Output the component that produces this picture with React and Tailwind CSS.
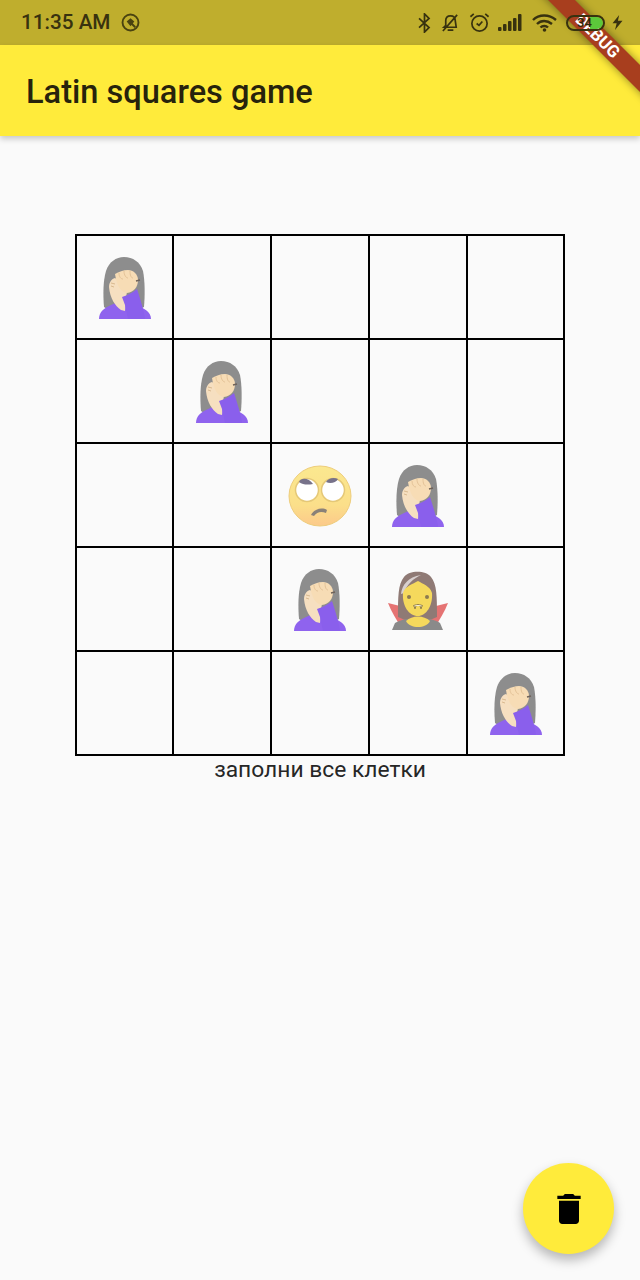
import React from "react";

const Palm = () => (
  <svg width="54" height="62" viewBox="0 0 54 62" className="block">
    <path d="M6 50 C5 38 5 24 8 14 C11 5 18 0 26 0 C35 0 42 5 45 14 C47 24 47 38 46 50 L38 54 L12 54Z" fill="#8d8d8d" />
    <path d="M1 62 C1 55 6 51 13 48 L20 45 L33 47 L38 48 C46 51 53 55 53 62Z" fill="#8f63ee" />
    <path d="M11 30 C11 26 13 22 17 21 L30 30 L28 40 L27 54 L23 53 C17 49 12 41 11 30Z" fill="#f6dfc0" />
    <path d="M24 12 L42 17 L45 30 L41 36 L38 26 Z" fill="#8d8d8d" />
    <path d="M17 17 C21 15 25 13 30 13 C35 13 40 17 40 23 C40 30 36 35 29 36 C23 35 19 30 17 17Z" fill="#f7dcb5" />
    <path d="M21 16 C21 20 23 22 25 22 M26 14 C26 18 28 21 30 21 M32 14 C32 18 33 21 35 21" stroke="#e4c398" strokeWidth="1" fill="none" />
    <path d="M24 40 C30 38 34 36 39 32 C41 38 45 50 47 61 C47 62 46 62 44 62 L30 62 L27 48Z" fill="#8a5fec" />
    <path d="M38 24 L42 23" stroke="#6f6259" strokeWidth="1.400" />
    <path d="M13 26 L17 27 M13 29 L16 30" stroke="#d9b98f" strokeWidth="1" />
  </svg>
);

const Roll = () => (
  <svg width="64" height="62" viewBox="0 0 64 62" className="block">
    <defs>
      <linearGradient id="rg" x1="0" y1="0" x2="0" y2="1">
        <stop offset="0" stopColor="#fbe88f" />
        <stop offset="0.65" stopColor="#fbdf8a" />
        <stop offset="1" stopColor="#fcc98a" />
      </linearGradient>
    </defs>
    <ellipse cx="32" cy="31" rx="31" ry="30" fill="url(#rg)" stroke="#eecd7c" strokeWidth="1" />
    <circle cx="19" cy="25" r="11.500" fill="#fff" stroke="#e5c877" strokeWidth="1.500" />
    <circle cx="45" cy="25" r="11.500" fill="#fff" stroke="#e5c877" strokeWidth="1.500" />
    <path d="M11 17 C13 12 21 13 25 19 C20 20 15 20 11 17Z" fill="#77728a" />
    <path d="M38 17 C40 13 46 12 50 14 C48 18 42 19 38 17Z" fill="#77728a" />
    <path d="M23 50 C26 44 34 42 39 45 L38 48 C33 46 29 47 26 51Z" fill="#8a8178" />
  </svg>
);

const Vamp = () => (
  <svg width="60" height="62" viewBox="0 0 60 62" className="block">
    <path d="M0 34 L16 38 L18 50 L13 58 C8 50 3 42 0 34Z" fill="#e57373" />
    <path d="M60 34 L44 38 L42 50 L47 58 C52 50 57 42 60 34Z" fill="#e57373" />
    <path d="M10 48 C10 28 10 15 16 8 C21 1 38 1 43 8 C49 15 49 28 49 48 L42 51 L17 51Z" fill="#8f7a75" />
    <path d="M13 25 C14 16 20 8 33 6 C25 10 19 15 16 24Z" fill="#d8d0cf" />
    <path d="M4 61 L7 54 C10 52 14 51 18 50 L41 50 C46 51 50 52 52 54 L55 61Z" fill="#8a8a8a" />
    <path d="M18 52 C22 60 38 60 42 52 C36 46 24 46 18 52Z" fill="#f5d95c" />
    <path d="M15 24 C17 17 25 15 30 12 C35 15 42 17 44 24 C45 37 38 47 30 47 C21 47 14 37 15 24Z" fill="#f5d95c" />
    <circle cx="21" cy="28" r="2" fill="#8c7a50" />
    <circle cx="39" cy="28" r="2" fill="#8c7a50" />
    <path d="M25 37 C28 35 32 35 35 37 M26 37 L27 40 L28 37 M32 37 L33 40 L34 37" fill="#f7f1dc" stroke="#95824a" strokeWidth="1" />
  </svg>
);

const cells = [
  ["p", "", "", "", ""],
  ["", "p", "", "", ""],
  ["", "", "r", "p", ""],
  ["", "", "p", "v", ""],
  ["", "", "", "", "p"],
];

const Cell = ({ v, first, last, lastRow }) => (
  <div
    className={`flex items-center justify-center border-t-2 border-l-2 border-black pt-[2px] ${first ? "w-[97px]" : last ? "w-[99px] border-r-2" : "w-[98px]"} ${lastRow ? "h-[106px] border-b-2" : "h-[104px]"}`}
  >
    {v === "p" && <Palm />}
    {v === "r" && <Roll />}
    {v === "v" && <Vamp />}
  </div>
);

export default function App() {
  return (
    <div className="relative flex h-[1280px] w-[640px] flex-col overflow-hidden bg-[#fafafa] font-['Roboto',sans-serif]">
      <div className="flex h-[45px] items-center justify-between bg-[#bfae2d] pl-[21px] pr-[17px] text-[#38320f]">
        <div className="flex items-center gap-[11px]">
          <span className="text-[20.7px] font-medium leading-none">11:35 AM</span>
          <svg width="19" height="19" viewBox="0 0 20 20" fill="none" stroke="#4a4310" strokeWidth="2">
            <circle cx="10" cy="10" r="8.400" />
            <path d="M6 9 L10 5.500 L14 9 L10 14Z" fill="#4a4310" stroke="none" />
            <path d="M10 10 L15 15" />
          </svg>
        </div>
        <div className="relative z-10 flex items-center">
          <svg width="13" height="20" viewBox="0 0 14 22" fill="none" stroke="#38320f" strokeWidth="1.900">
            <path d="M1 6 L12 16 L7 21 L7 1 L12 6 L1 16" />
          </svg>
          <svg className="ml-[10px]" width="19" height="19" viewBox="0 0 20 20" fill="none" stroke="#38320f" strokeWidth="1.800">
            <path d="M3 15 L5 13 L5 8 C5 4 8 3 10 3 C13 3 15 5 15 8 L16 15Z M7 18 L13 18 M2 19 L17 2" />
          </svg>
          <svg className="ml-[9px]" width="21" height="21" viewBox="0 0 22 22" fill="none" stroke="#38320f" strokeWidth="1.800">
            <circle cx="11" cy="12" r="8" />
            <path d="M8 12 L10.500 14 L14 10 M1.500 5 L5 2 M20.500 5 L17 2" />
          </svg>
          <svg className="ml-[8px]" width="24" height="17" viewBox="0 0 24 17" fill="#38320f">
            <rect x="0" y="13" width="3.500" height="4" rx="1" />
            <rect x="5" y="10" width="3.500" height="7" rx="1" />
            <rect x="10" y="7" width="3.500" height="10" rx="1" />
            <rect x="15" y="4" width="3.500" height="13" rx="1" />
            <rect x="20" y="0" width="3.500" height="17" rx="1" />
          </svg>
          <svg className="ml-[10px]" width="25" height="18" viewBox="0 0 25 18" fill="none" stroke="#38320f" strokeWidth="2.400">
            <path d="M1 6 C7 0 17 0 24 6 M5 10 C9 6 15 6 20 10 M8.500 13.500 C10.500 11.500 14 11.500 16 13.500" />
            <circle cx="12.500" cy="16" r="1.800" fill="#38320f" stroke="none" />
          </svg>
          <div className="relative ml-[9px] flex h-[16px] w-[39px] items-center overflow-hidden rounded-full border-2 border-[#38320f]">
            <div className="absolute left-[22px] top-0 h-full w-[13px] rounded-r-full bg-[#5cc83a]" />
            <span className="relative ml-[9px] text-[13px] font-medium leading-none text-[#2a2508]">34</span>
          </div>
          <svg className="ml-[7px]" width="11" height="15" viewBox="0 0 12 18" fill="#38320f">
            <path d="M8 0 L0 10 L5 10 L3 18 L12 7 L6.500 7Z" />
          </svg>
        </div>
      </div>
      <div className="flex h-[91px] items-center bg-[#ffeb3b] pl-[26px] pt-[4px] shadow-[0_3px_6px_rgba(0,0,0,0.2)]">
        <h1 className="text-[32.6px] font-medium leading-none text-[#27230c]">Latin squares game</h1>
      </div>
      <div className="flex flex-col items-center pt-[98px]">
        <div className="flex flex-col">
          {cells.map((row, i) => (
            <div key={i} className="flex">
              {row.map((v, j) => (
                <Cell key={j} v={v} first={j === 0} last={j === 4} lastRow={i === 4} />
              ))}
            </div>
          ))}
        </div>
        <p className="text-[22.8px] leading-[28px] text-[#262626]">заполни все клетки</p>
      </div>
      <button className="absolute left-[523px] top-[1163px] flex h-[91px] w-[91px] items-center justify-center rounded-full bg-[#ffeb3b] shadow-[0_6px_12px_rgba(0,0,0,0.28)]">
        <svg width="40" height="40" viewBox="0 0 24 24" fill="#000">
          <path d="M6 19c0 1.100.9 2 2 2h8c1.100 0 2-.9 2-2V7H6v12zM19 4h-3.500l-1-1h-5l-1 1H5v2h14V4z" />
        </svg>
      </button>
      <div className="absolute left-[489px] top-[28px] h-[19px] w-[220px] rotate-45 bg-[#a83e1e] pr-[4px] text-center text-[17px] font-bold leading-[19px] text-white shadow-[0_0_8px_rgba(0,0,0,0.45)]">
        DEBUG
      </div>
    </div>
  );
}
